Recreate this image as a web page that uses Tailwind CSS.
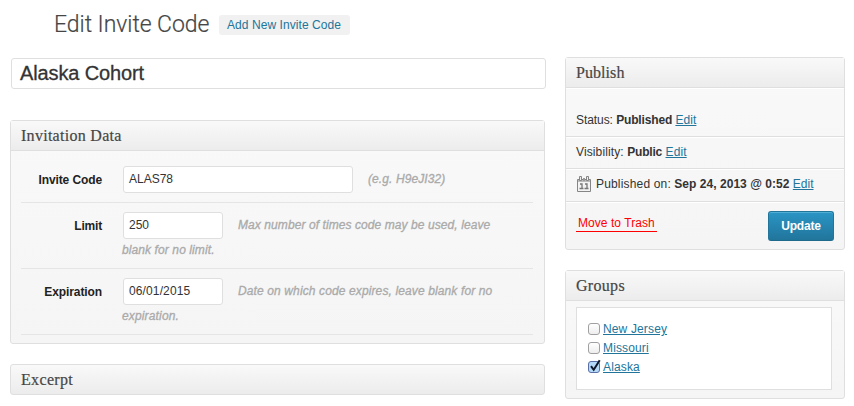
<!DOCTYPE html>
<html lang="en">
<head>
<meta charset="utf-8">
<title>Edit Invite Code</title>
<script src="https://cdn.jsdelivr.net/npm/@tailwindcss/browser@4"></script>
</head>
<body class="h-[406px] overflow-hidden bg-white font-['Liberation_Sans',Arial,sans-serif] text-[12px] leading-[18px] whitespace-nowrap text-[#333]">
<header class="flex h-[57px] items-start pl-[54px]">
  <h1 class="w-[165px] pt-[10px] font-[Roboto,sans-serif] text-[23px] leading-[30px] font-light tracking-[-0.05px] text-[#464646] [-webkit-text-stroke:0.2px_#464646]">Edit Invite Code</h1>
  <a class="mt-[15px] h-5 w-[131px] rounded-[3px] bg-[#f1f1f1] pl-2 leading-[20px] tracking-[0.07px] text-[#21759b]">Add New Invite Code</a>
</header>
<div class="flex items-start gap-5 pl-[10px]">
  <main class="w-[535px]">
    <div class="mt-px ml-px h-[31px] w-[535px] rounded-[3px] border border-[#dfdfdf] bg-white pl-2 text-[20px] leading-[28px] tracking-[-0.12px] text-[#333] [-webkit-text-stroke:0.3px_#333]">Alaska Cohort</div>
    <section class="mt-[31px] h-[224px] rounded-[3px] border border-[#dfdfdf] bg-linear-to-b from-[#f9f9f9] to-[#f5f5f5]">
      <h2 class="h-[30px] border-b border-[#dfdfdf] bg-linear-to-b from-[#f9f9f9] to-[#ececec] pl-[10px] font-['Liberation_Serif',serif] text-[16px] leading-[30px] tracking-[0.28px] text-[#464646] [-webkit-text-stroke:0.2px_#464646]">Invitation Data</h2>
      <div class="ml-[10px] w-[512px]">
        <div class="flex h-[52px] border-b border-[#e5e5e5] pt-[15px]">
          <label class="mr-[21px] w-[81px] pt-[5px] text-right font-bold tracking-[-0.1px] text-[#222]">Invite Code</label>
          <div class="flex h-[27px] w-[230px] rounded-[3px] border border-[#dfdfdf] bg-white pl-[5px] leading-[25px]">ALAS78</div>
          <em class="ml-[15px] leading-[26px] tracking-[0.09px] text-[#aaa] [-webkit-text-stroke:0.3px_#aaa]">(e.g. H9eJI32)</em>
        </div>
        <div class="flex h-[66px] border-b border-[#e5e5e5] pt-[9px]">
          <label class="mr-[21px] w-[81px] pt-[5px] text-right font-bold tracking-[-0.2px] text-[#222]">Limit</label>
          <div>
            <div class="flex">
              <div class="h-[27px] w-[100px] rounded-[3px] border border-[#dfdfdf] bg-white pl-[5px] leading-[25px]">250</div>
              <em class="ml-[15px] leading-[26px] tracking-[0.08px] text-[#aaa] [-webkit-text-stroke:0.3px_#aaa]">Max number of times code may be used, leave</em>
            </div>
            <em class="-ml-px block pt-px leading-5 tracking-[0.1px] text-[#aaa] [-webkit-text-stroke:0.3px_#aaa]">blank for no limit.</em>
          </div>
        </div>
        <div class="flex h-[66px] border-b border-[#e5e5e5] pt-[9px]">
          <label class="mr-[21px] w-[81px] pt-[5px] text-right font-bold tracking-[-0.1px] text-[#222]">Expiration</label>
          <div>
            <div class="flex">
              <div class="h-[27px] w-[100px] rounded-[3px] border border-[#dfdfdf] bg-white pl-[5px] leading-[25px] tracking-[0.12px]">06/01/2015</div>
              <em class="ml-[15px] leading-[26px] tracking-[0.12px] text-[#aaa] [-webkit-text-stroke:0.3px_#aaa]">Date on which code expires, leave blank for no</em>
            </div>
            <em class="-ml-px block pt-px leading-5 tracking-[0.15px] text-[#aaa] [-webkit-text-stroke:0.3px_#aaa]">expiration.</em>
          </div>
        </div>
      </div>
    </section>
    <section class="mt-5 h-[31px] rounded-[3px] border border-[#dfdfdf] bg-linear-to-b from-[#f9f9f9] to-[#ececec]">
      <h2 class="pl-[10px] font-['Liberation_Serif',serif] text-[16px] leading-[30px] tracking-[0.34px] text-[#464646] [-webkit-text-stroke:0.2px_#464646]">Excerpt</h2>
    </section>
  </main>
  <aside class="w-[280px]">
    <section class="h-[193px] rounded-[3px] border border-[#dfdfdf] bg-linear-to-b from-[#f9f9f9] to-[#f5f5f5]">
      <h2 class="h-[30px] border-b border-[#dfdfdf] bg-linear-to-b from-[#f9f9f9] to-[#ececec] pl-[10px] font-['Liberation_Serif',serif] text-[16px] leading-[30px] tracking-[0.06px] text-[#464646] [-webkit-text-stroke:0.2px_#464646]">Publish</h2>
      <div class="h-[49px] border-t border-b border-[#dfdfdf] border-t-white pt-[22px] pl-[10px] tracking-[-0.07px]">Status: <b class="tracking-[-0.15px]">Published</b> <a class="text-[#21759b] underline tracking-[0.08px]">Edit</a></div>
      <div class="h-8 border-t border-b border-[#dfdfdf] border-t-white pt-[5px] pl-[10px] tracking-[0.12px]">Visibility: <b class="tracking-[-0.2px]">Public</b> <a class="text-[#21759b] underline">Edit</a></div>
      <div class="flex h-[33px] border-t border-b border-[#dfdfdf] border-t-white pt-[5px] pl-[11px]">
        <svg class="mt-px mr-[5px]" width="14" height="16" viewBox="0 0 14 16" fill="none">
          <path d="M.5 3.500h13v12H.5z" fill="#f3f3f3" stroke="#858585"/>
          <path d="M1 4h12v2H1z" fill="#bbb"/>
          <path d="M2.500.500h2v4h-2zM9.500.500h2v4h-2z" fill="#eee" stroke="#858585"/>
          <path d="M6 2h2v3H6z" fill="#999"/>
          <path d="M3 8h2v4.500M2.500 12.500h4M8 8h2v4.500M7.500 12.500h4" stroke="#777" stroke-width="1.300"/>
        </svg>
        <span><span class="tracking-[0.17px]">Published on:</span> <b class="tracking-[0.04px]">Sep 24, 2013 @ 0:52</b> <a class="text-[#21759b] underline">Edit</a></span>
      </div>
      <div class="flex justify-between border-t border-white pr-[10px] pl-[10px]">
        <a class="mt-[11px] h-[18px] w-[81px] border-b border-[#f00] pl-[2px] tracking-[0.06px] text-[#f00]">Move to Trash</a>
        <button class="mt-2 h-[30px] w-[66px] rounded-[3px] border border-[#21759b] border-b-[#1e6a8d] bg-linear-to-b from-[#2a95c5] to-[#21759b] text-center leading-7 font-bold tracking-[-0.2px] text-white shadow-[inset_0_1px_0_rgba(120,200,230,0.5)]">Update</button>
      </div>
    </section>
    <section class="mt-5 h-[129px] rounded-[3px] border border-[#dfdfdf] bg-linear-to-b from-[#f9f9f9] to-[#f5f5f5]">
      <h2 class="h-[30px] border-b border-[#dfdfdf] bg-linear-to-b from-[#f9f9f9] to-[#ececec] pl-[10px] font-['Liberation_Serif',serif] text-[16px] leading-[30px] tracking-[0.3px] text-[#464646] [-webkit-text-stroke:0.2px_#464646]">Groups</h2>
      <ul class="mt-[6px] ml-[10px] h-[83px] w-[256px] border border-[#dfdfdf] bg-white pt-[12px] pl-[11px] leading-[19px] tracking-[0.14px] text-[#21759b]">
        <li class="flex"><span class="mt-[3px] mr-[3px] size-3 rounded-[3px] border border-[#a0a0a0] bg-linear-to-b from-white to-[#eee]"></span><a class="underline">New Jersey</a></li>
        <li class="flex"><span class="mt-[3px] mr-[3px] size-3 rounded-[3px] border border-[#a0a0a0] bg-linear-to-b from-white to-[#eee]"></span><a class="underline">Missouri</a></li>
        <li class="flex"><svg class="mt-[1px] mr-[2px]" width="13" height="15" viewBox="0 0 13 15" fill="none">
          <rect x=".5" y="2.500" width="11" height="11" rx="2.500" fill="#b5daf8" stroke="#5a6fa5"/>
          <path d="M3 7.200l2.700 3.600L11.700 1.200" stroke="#101828" stroke-width="2"/>
        </svg><a class="underline">Alaska</a></li>
      </ul>
    </section>
  </aside>
</div>
</body>
</html>
